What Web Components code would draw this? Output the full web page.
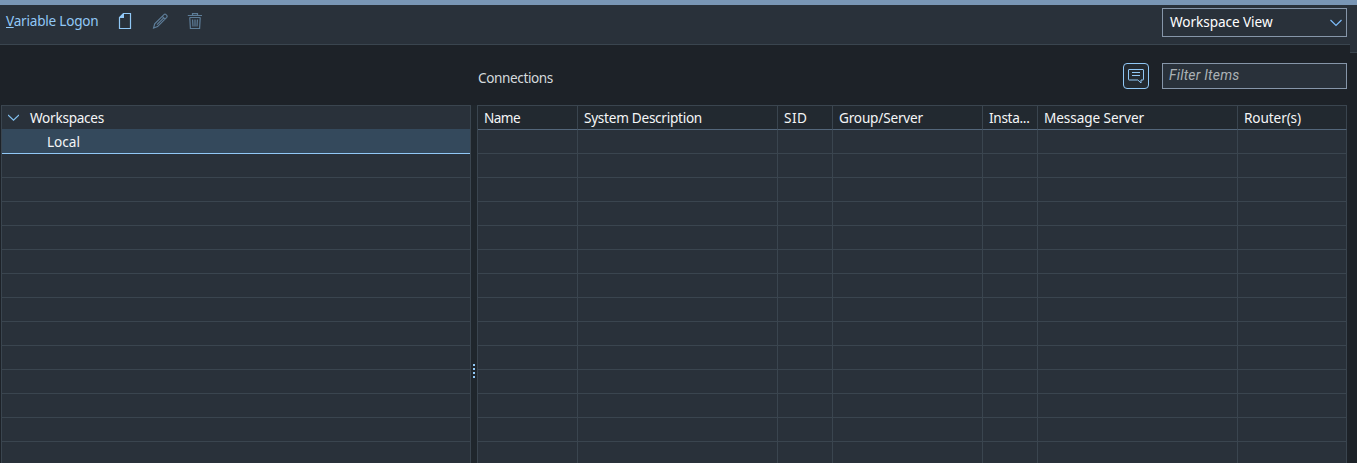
<!DOCTYPE html>
<html lang="en">
<head>
<meta charset="utf-8">
<title>Logon Workspaces</title>
<style>
html,body{margin:0;height:100%;overflow:hidden;background:#1d2228;font:13.6px/20px "Noto Sans",sans-serif;color:#f5f6f7}
</style>
</head>
<body>
<logon-app></logon-app>
<script>
const define = (name, html, setup) => customElements.define(name, class extends HTMLElement {
  constructor() {
    super();
    const t = document.createElement('template');
    t.innerHTML = html;
    this.attachShadow({ mode: 'open' }).append(t.content.cloneNode(true));
  }
  connectedCallback() { if (setup) setup(this, this.shadowRoot); }
});

/* Label whose tracking is adjusted to a given advance width. */
define('fit-label', `<style>:host{display:inline-block;white-space:nowrap}span{display:inline-block}</style><span><slot></slot></span>`, (el, root) => {
  const span = root.querySelector('span');
  const want = +el.getAttribute('width');
  const fit = () => {
    span.style.letterSpacing = '0px';
    const n = el.textContent.length;
    span.style.letterSpacing = ((want - span.getBoundingClientRect().width) / n) + 'px';
  };
  requestAnimationFrame(fit);
  queueMicrotask(fit);
});

define('tool-bar', `<style>
:host{display:flex;box-sizing:border-box;height:45px;border-top:5px solid #7996b5;border-bottom:1px solid #3a454f;background:#29313a;color:#91c8f6;padding:0 10px 0 6px;align-items:flex-start}
.link{width:112px;padding-top:6px}
u{text-decoration:underline;text-decoration-thickness:1px;text-underline-offset:1px}
svg{display:block;fill:none}
.off{opacity:.5}
.new{margin-top:8px;width:14px}.edit{margin:8px 0 0 20px}.del{margin:8px 0 0 18px}
view-select{margin-left:auto;margin-top:3px}
</style>
<div class="link"><fit-label width="92.5"><u>V</u>ariable Logon</fit-label></div>
<svg class="new" width="14" height="17" viewBox="0 0 14 17"><path d="M5.5.5h7v15h-11v-11z" stroke="#91c8f6" stroke-width="1.2"/><path d="M1 5l5-5v5z" fill="#91c8f6"/></svg>
<svg class="edit off" width="17" height="17" viewBox="0 0 17 17" stroke="#91c8f6" stroke-width="1.2"><path d="M1.6 15l1.1-4.2L12 1.6q1-.9 2 0l.7.7q.9 1 0 2L5.6 13.6zM10.3 3.3l2.8 2.8M5 11.7l6.7-6.8"/></svg>
<svg class="del off" width="16" height="17" viewBox="0 0 16 17" stroke="#91c8f6" stroke-width="1.2"><path d="M.8 2.5h14.2M5.5 2.2V.6h5v1.6M2.5 4.5h11M2.8 4.7l.6 10.8h9.2l.6-10.8M5.6 6.5l.4 7M8 6.5v7M10.4 6.5l-.4 7"/></svg>
<view-select></view-select>`);

define('view-select', `<style>
:host{display:flex;box-sizing:border-box;width:185px;height:29px;border:1px solid #8696a9;background:#29313a;color:#fff;padding:3px 4px 0 7px;justify-content:space-between}
svg{margin-top:7px}
</style><fit-label width="102.5">Workspace View</fit-label>
<svg width="12" height="8" viewBox="0 0 12 8" fill="none" stroke="#7dbcfa" stroke-width="1.2"><path d="M.5 1L6 6.5 11.5 1"/></svg>`);

define('action-bar', `<style>
:host{display:flex;height:60px;padding:0 10px 0 478px;align-items:flex-start}
.title{padding-top:23px;color:#d5dadd;margin-right:auto}
.note{box-sizing:border-box;width:26px;height:26px;margin-top:18px;border:1px solid #91c8f6;border-radius:4px;background:#232a31}
.note svg{display:block}
.filter{box-sizing:border-box;width:185px;height:26px;margin:18px 0 0 13px;border:1px solid #8696a9;background:#29313a;color:#abb1b5;font:italic 14px/20px Roboto,sans-serif;padding:1px 6px}
</style><div class="title"><fit-label width="75">Connections</fit-label></div>
<div class="note"><svg width="24" height="24" viewBox="0 0 24 24" fill="none" stroke="#91c8f6"><path d="M5 5.5h14q.5 0 .5.5v9.5q0 .5-.5.5h-2v3l-3.2-3H5q-.5 0-.5-.5V6q0-.5.5-.5zM8 8.5h8M8 11.5h8"/></svg></div>
<div class="filter"><fit-label width="70.5">Filter Items</fit-label></div>`);

define('workspace-tree', `<style>
:host{display:block;box-sizing:border-box;width:470px;height:358px;border:solid #3a454f;border-width:1px 1px 0;background:#29313a;overflow:hidden}
div{box-sizing:border-box;height:24px;border-bottom:1px solid #3a454f;display:flex;padding:3px 0 0 45px;line-height:20px}
.root{height:23px;padding-left:5px;padding-top:2px;border:0}
.root svg{margin:6px 11px 0 1px}
.sel{height:25px;background:#34495c;border-color:#91c8f6;padding-top:3px}
</style>
<div class="root"><svg width="11" height="8" viewBox="0 0 11 8" fill="none" stroke="#84c2f0" stroke-width="1.2"><path d="M0 1l5.5 5.2L11 1"/></svg><fit-label width="74">Workspaces</fit-label></div>
<div class="sel"><fit-label width="33">Local</fit-label></div>
${'<div></div>'.repeat(13)}`);

define('pane-splitter', `<style>
:host{display:block;width:6px;height:358px;background:#1f262c}
svg{display:block;margin:259px 0 0 2px}
</style><svg width="2" height="14" fill="#91c8f6"><path d="M0 0h2v2H0zM0 4h2v2H0zM0 8h2v2H0zM0 12h2v2H0z"/></svg>`);

const columns = [[100,'Name',36],[200,'System Description',118],[55,'SID',23.5],[150,'Group/Server',84],[55,'Insta...',40.5],[200,'Message Server',100],[109,'Router(s)',57]];
const cells = fn => columns.map(c => `<span>${fn(c)}</span>`).join('');
define('connection-table', `<style>
:host{display:block;box-sizing:border-box;width:870px;height:358px;border:solid #3a454f;border-width:1px 0 0 1px;background:#29313a;overflow:hidden}
div{display:grid;grid-template-columns:${columns.map(c => c[0] + 'px').join(' ')};height:24px}
span{box-sizing:border-box;border:solid #3a454f;border-width:0 1px 1px 0;padding-left:6px;overflow:hidden}
.head{background:#222930}
.head span{border-bottom-color:#53667a;padding-top:2px}
</style><div class="head">${cells(c => `<fit-label width="${c[2]}">${c[1]}</fit-label>`)}</div>
${('<div>' + cells(() => '') + '</div>').repeat(14)}`);

define('logon-app', `<style>
:host{display:block;position:relative;width:1357px;height:463px;overflow:hidden}
main{display:flex;padding-left:1px}
.corner{position:absolute;left:1350px;top:44px;width:7px;height:8px;background:#29313a;border-bottom:1px solid #3a454f}
</style><tool-bar></tool-bar><action-bar></action-bar><main><workspace-tree></workspace-tree><pane-splitter></pane-splitter><connection-table></connection-table></main><div class="corner"></div>`);
</script>
</body>
</html>
